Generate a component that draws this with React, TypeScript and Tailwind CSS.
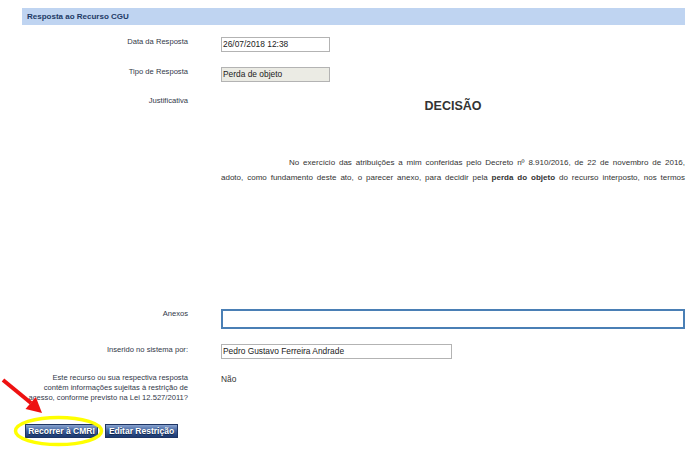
export default function App() {
  const label = "text-right text-[7.6px] leading-[10px] text-[#313848]";
  const input = "h-[15px] border border-[#b3b3b3] px-[1px] text-[8.4px] leading-[13px] text-[#222]";
  const btn =
    "h-[14px] w-[73px] border border-[#1e3563] bg-gradient-to-b from-[#8aa4d0] via-[#3d5f9c] to-[#1c3a72] text-white text-[8.5px] font-bold leading-[12px] [text-shadow:0_1px_1px_#0d1f40]";

  return (
    <div className="relative w-[697px] h-[451px] bg-white overflow-hidden font-['Liberation_Sans',Arial,sans-serif]">
      <div className="pt-[8px] pl-[22px] w-[685px]">
        <div className="h-[17px] bg-[#bfd4f1] flex items-center pl-[5px] text-[8px] font-bold text-[#1d3a66]">
          Resposta ao Recurso CGU
        </div>

        <div className="grid grid-cols-[166px_464px] gap-x-[33px] mt-[12px]">
          <div className={label}>Data da Resposta</div>
          <div>
            <div className={`${input} w-[109px] bg-white`}>26/07/2018 12:38</div>
          </div>
        </div>

        <div className="grid grid-cols-[166px_464px] gap-x-[33px] mt-[15px]">
          <div className={label}>Tipo de Resposta</div>
          <div>
            <div className={`${input} w-[109px] bg-[#ebebe4]`}>Perda de objeto</div>
          </div>
        </div>

        <div className="grid grid-cols-[166px_464px] gap-x-[33px] mt-[15px] h-[212px]">
          <div className={`${label} -mt-[1px]`}>Justificativa</div>
          <div className="text-[#333]">
            <div className="text-center text-[12.5px] leading-[15px] font-bold pt-[2px]">DECISÃO</div>
            <div className="mt-[41px] text-[8px] leading-[15px]">
              <div className="pl-[68px] text-justify [text-align-last:justify]">
                No exercício das atribuições a mim conferidas pelo Decreto nº 8.910/2016, de 22 de novembro de 2016,
              </div>
              <div className="text-justify [text-align-last:justify]">
                adoto, como fundamento deste ato, o parecer anexo, para decidir pela <b>perda do objeto</b> do recurso interposto, nos termos
              </div>
            </div>
          </div>
        </div>

        <div className="grid grid-cols-[166px_464px] gap-x-[33px]">
          <div className={label}>Anexos</div>
          <div>
            <div className="h-[20px] w-[464px] border-2 border-[#4a7fb5] bg-white" />
          </div>
        </div>

        <div className="grid grid-cols-[166px_464px] gap-x-[33px] mt-[15px]">
          <div className={`${label} pt-[1px]`}>Inserido no sistema por:</div>
          <div>
            <div className={`${input} w-[231px] bg-white`}>Pedro Gustavo Ferreira Andrade</div>
          </div>
        </div>

        <div className="grid grid-cols-[166px_464px] gap-x-[33px] mt-[14px]">
          <div className={`${label} -ml-[30px]`}>
            Este recurso ou sua respectiva resposta
            <br />
            contêm informações sujeitas à restrição de
            <br />
            acesso, conforme previsto na Lei 12.527/2011?
          </div>
          <div className="text-[8.4px] leading-[10px] text-[#333] pt-[1px]">Não</div>
        </div>

        <div className="flex gap-[7px] mt-[21px] ml-[3px]">
          <button className={btn}>Recorrer à CMRI</button>
          <button className={btn}>Editar Restrição</button>
        </div>
      </div>

      <svg className="absolute left-0 top-0 pointer-events-none" width="697" height="451">
        <line x1="3" y1="380" x2="31" y2="403" stroke="#ee1111" strokeWidth="4" />
        <polygon points="42,413 25.5,409 35.8,397" fill="#ee1111" />
        <ellipse cx="58.5" cy="431" rx="43" ry="13.5" fill="none" stroke="#ffff00" strokeWidth="3.5" />
      </svg>
    </div>
  );
}
